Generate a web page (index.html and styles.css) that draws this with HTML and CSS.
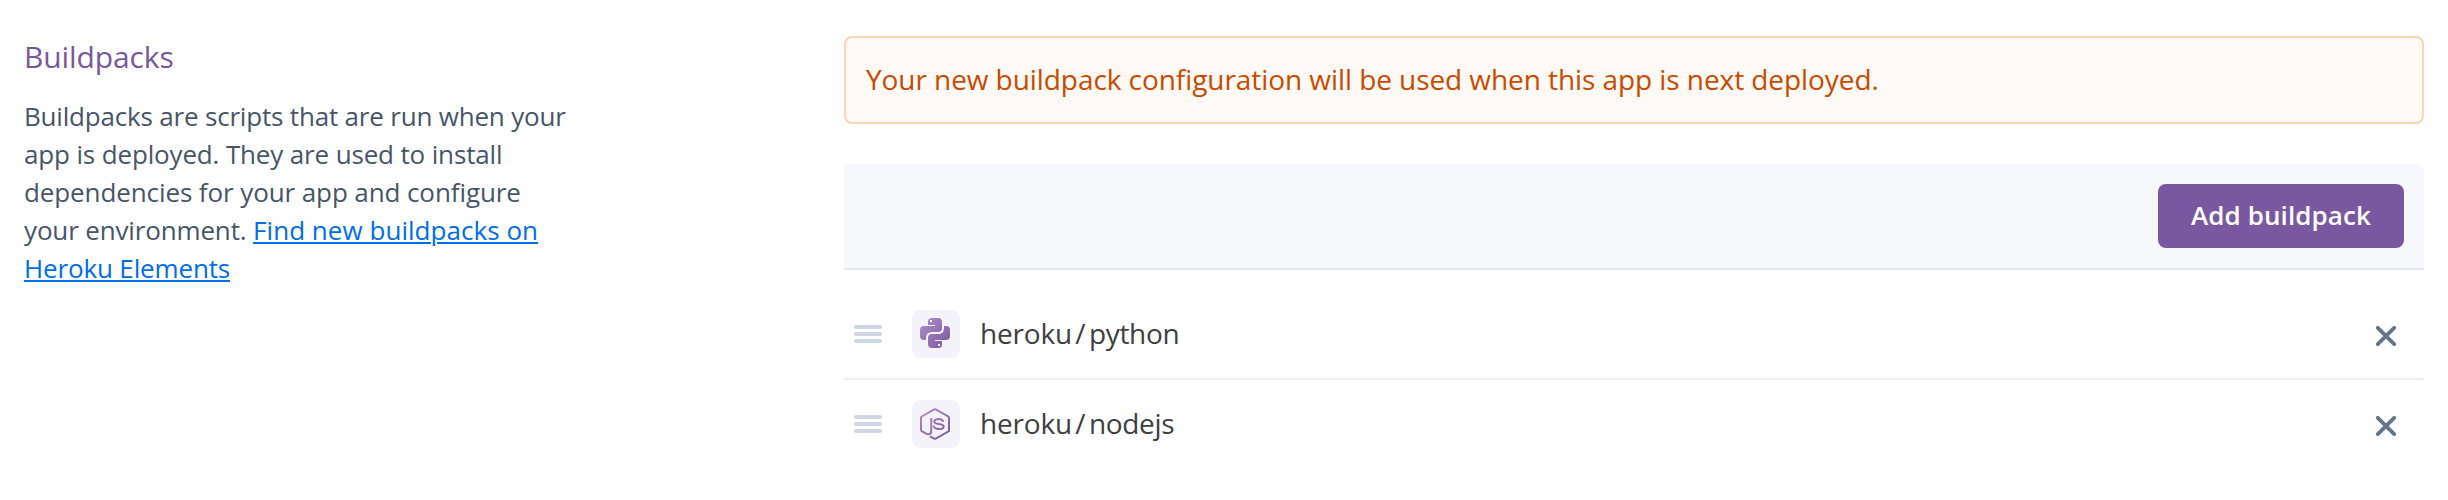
FILE: index.html
```html
<!DOCTYPE html>
<html lang="en">
<head>
<meta charset="utf-8">
<title>Buildpacks</title>
<link rel="stylesheet" href="styles.css">
</head>
<body>
<section class="settings">
  <div class="intro">
    <h2 class="intro-title">Buildpacks</h2>
    <p class="intro-text"><span class="line-a">Buildpacks are scripts that are run when your</span><br><span class="line-b">app is deployed. They are used to install</span><br><span class="line-c">dependencies for your app and configure</span><br><span class="line-b">your environment. </span><a class="link" href="#"><span class="line-d">Find new buildpacks on</span><br><span class="line-b">Heroku Elements</span></a></p>
  </div>
  <div class="content">
    <div class="notice">Your new buildpack configuration will be used when this app is next deployed.</div>
    <div class="toolbar"><button class="button">Add buildpack</button></div>
    <ul class="list">
      <li class="row">
        <span class="grip"><i></i><i></i><i></i></span>
        <span class="tile">
          <svg width="30" height="30" viewBox="0 0 30 30">
            <defs><linearGradient id="g1" gradientUnits="userSpaceOnUse" x1="2" y1="2" x2="28" y2="28"><stop offset="0" stop-color="#ac8dc9"/><stop offset="1" stop-color="#7d59a0"/></linearGradient></defs>
            <g fill="url(#g1)" fill-rule="evenodd">
              <path d="M8 3.5Q8 0 12 0H18Q22 0 22 4V10Q22 14 18 14H12Q6 14 6 20V22H4Q0 22 0 18V12Q0 8 4 8H15V7H8ZM10 2V4H12V2Z"/>
              <path d="M22 26.500Q22 30 18 30H12Q8 30 8 26V20Q8 16 12 16H18Q24 16 24 10V8H26Q30 8 30 12V18Q30 22 26 22H15V23H22ZM20 28V26H18V28Z"/>
            </g>
          </svg>
        </span>
        <span class="name"><span class="owner">heroku</span><span class="slash">/</span><span class="pack">python</span></span>
        <svg class="remove" width="20" height="20" viewBox="0 0 20 20"><path d="M1.800 1.800 18.200 18.200M18.200 1.800 1.800 18.200"/></svg>
      </li>
      <li class="row">
        <span class="grip"><i></i><i></i><i></i></span>
        <span class="tile">
          <svg width="30" height="32" viewBox="0 0 30 32">
            <defs><linearGradient id="g2" gradientUnits="userSpaceOnUse" x1="2" y1="2" x2="28" y2="28"><stop offset="0" stop-color="#ac8dc9"/><stop offset="1" stop-color="#7d59a0"/></linearGradient></defs>
            <g fill="none" stroke="url(#g2)" stroke-width="2" stroke-linejoin="round">
              <path d="M11.300 10V22.500Q11.300 26.300 8.500 26.300Q7.300 26.300 6 25.500L1.700 23.200Q1 22.800 1 22V9.700Q1 8.900 1.700 8.500L14.300 1.400Q15 1 15.700 1.400L28.300 8.500Q29 8.900 29 9.700V22.300Q29 23.100 28.300 23.500L15.700 30.600Q15 31 14.300 30.600L10 28.300"/>
              <path d="M23.200 13.800Q22.700 11 18.600 11Q14.300 11 14.300 13.600Q14.300 15.600 18.600 16Q23.600 16.500 23.600 18.500Q23.600 21 19 21Q14 21 13.800 17.800"/>
            </g>
          </svg>
        </span>
        <span class="name"><span class="owner">heroku</span><span class="slash">/</span><span class="pack">nodejs</span></span>
        <svg class="remove" width="20" height="20" viewBox="0 0 20 20"><path d="M1.800 1.800 18.200 18.200M18.200 1.800 1.800 18.200"/></svg>
      </li>
    </ul>
  </div>
</section>
</body>
</html>
```
FILE: styles.css
```css
* { box-sizing: border-box; }
body { margin: 0; background: #fff; font-family: "Open Sans", "Noto Sans", sans-serif; font-feature-settings: "liga" 1; }
.settings { display: grid; grid-template-columns: 820px 1580px; padding: 36px 24px 0; height: 500px; }
.intro-title { margin: 0; color: #79589f; font-size: 30px; font-weight: 400; line-height: 41px; letter-spacing: -0.1px; }
.intro-text { margin: 20px 0 0; color: #475569; font-size: 26px; line-height: 38px; white-space: nowrap; }
.line-a { letter-spacing: -0.19px; }
.line-b { letter-spacing: -0.15px; }
.line-c { letter-spacing: -0.1px; }
.line-d { letter-spacing: 0.04px; }
.link { color: #006deb; text-decoration: underline; text-decoration-thickness: 2px; text-underline-offset: 2px; }
.notice { display: flex; align-items: center; height: 88px; padding: 0 20px 2px; border: 2px solid #fdd5b1; border-radius: 8px; background: #fffaf6; color: #ca4a00; font-size: 28px; letter-spacing: -0.07px; }
.toolbar { display: flex; justify-content: flex-end; align-items: center; height: 106px; margin-top: 40px; padding-right: 20px; border-bottom: 2px solid #e3e7ef; border-radius: 8px 8px 0 0; background: #f7f8fc; }
.button { width: 246px; height: 64px; padding: 0 0 3px; border: 0; border-radius: 8px; background: #79589f; color: #fff; font: 600 26px "Open Sans", sans-serif; letter-spacing: 0.08px; }
.list { margin: 20px 0 0; padding: 0; list-style: none; }
.row { display: flex; align-items: center; height: 90px; padding: 0 28px 0 10px; border-bottom: 2px solid #edf1f6; }
.row:last-child { border-color: transparent; }
.grip { display: grid; gap: 3.5px; width: 28px; margin-right: 30px; }
.grip i { height: 3.7px; border-radius: 2px; background: #cfd7e6; }
.tile { padding: 8px 0 0 8px; width: 48px; height: 48px; border-radius: 8px; background: #f5f3fa; }
.name { display: flex; margin-left: 20px; padding-bottom: 2px; color: #3f3f44; font-size: 28px; line-height: 40px; }
.owner { letter-spacing: -0.2px; }
.pack { letter-spacing: -0.3px; }
.slash { width: 17px; text-align: center; }
.remove { margin: 4px 0 0 auto; stroke: #62748e; stroke-width: 3.8; stroke-linecap: round; }
```
